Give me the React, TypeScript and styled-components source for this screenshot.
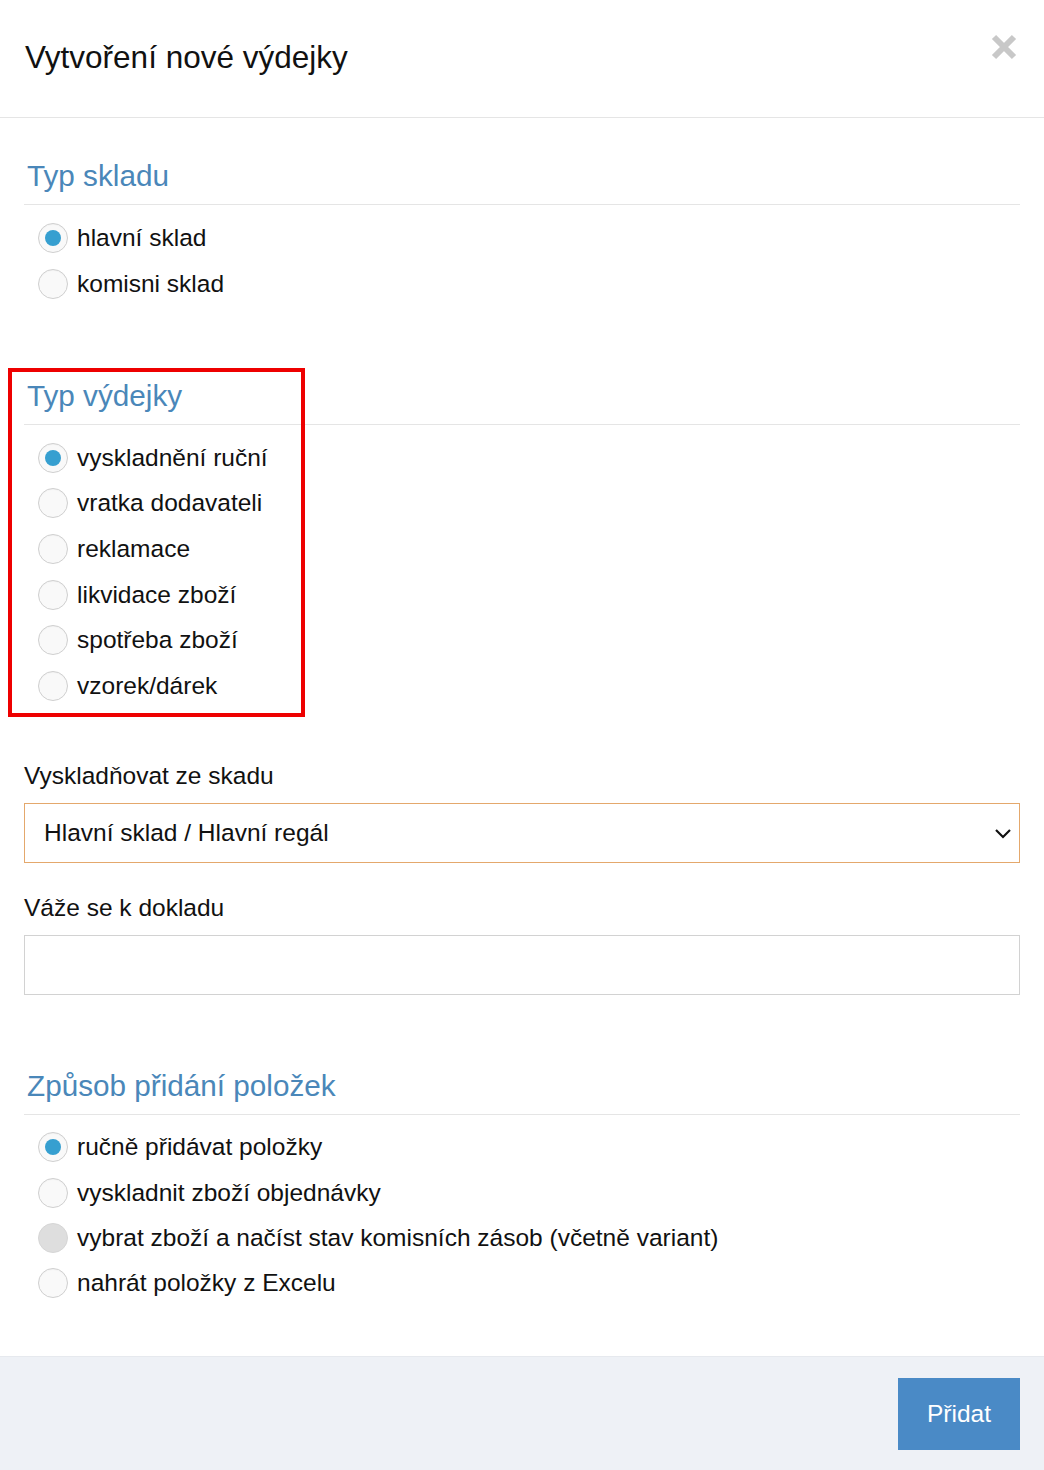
import React from 'react';
import styled, { createGlobalStyle } from 'styled-components';

const GlobalStyle = createGlobalStyle`
  html, body {
    margin: 0;
    padding: 0;
    background: #ffffff;
    font-family: "Liberation Sans", Arial, sans-serif;
    color: #111111;
  }
`;

const Modal = styled.div`
  width: 1044px;
  min-height: 1470px;
  display: flex;
  flex-direction: column;
  background: #ffffff;
`;

const Header = styled.div`
  height: 118px;
  border-bottom: 1px solid #e5e5e5;
  display: flex;
  align-items: flex-start;
  justify-content: space-between;
  padding: 0 24px 0 25px;
  box-sizing: border-box;
`;

const Title = styled.h1`
  margin: 38px 0 0;
  font-size: 31.5px;
  line-height: 38px;
  font-weight: 400;
  color: #111111;
`;

const Close = styled.button`
  margin-top: 33px;
  margin-right: 2px;
  padding: 0;
  border: none;
  background: transparent;
  width: 28px;
  height: 28px;
  display: flex;
  align-items: center;
  justify-content: center;
  cursor: pointer;
`;

const Body = styled.div`
  padding: 0 24px;
  display: flex;
  flex-direction: column;
  flex: 1;
`;

const Section = styled.section<{ $top: number }>`
  position: relative;
  margin-top: ${(p) => p.$top}px;
`;

const SectionTitle = styled.h2`
  margin: 0;
  padding: 0 0 10px 3px;
  font-size: 29.7px;
  line-height: 36px;
  font-weight: 400;
  color: #4a87b9;
  border-bottom: 1px solid #e5e5e5;
`;

const RadioList = styled.div<{ $row: number }>`
  margin-top: 10px;
  display: grid;
  grid-auto-rows: ${(p) => p.$row}px;
`;

const RadioRow = styled.label`
  display: flex;
  align-items: center;
  padding-left: 14px;
  font-size: 24.5px;
  color: #111111;
  cursor: pointer;
`;

const RadioCircle = styled.span<{ $checked?: boolean; $disabled?: boolean }>`
  width: 30px;
  height: 30px;
  box-sizing: border-box;
  border-radius: 50%;
  border: 1px solid ${(p) => (p.$disabled ? '#d6d6d6' : '#cfcfcf')};
  background: ${(p) => (p.$disabled ? '#dedede' : '#f9f9f9')};
  display: flex;
  align-items: center;
  justify-content: center;
  margin-right: 9px;
  flex-shrink: 0;
  box-shadow: ${(p) => (p.$disabled ? 'none' : 'inset 0 1px 1px rgba(0,0,0,0.03)')};

  &::after {
    content: '';
    display: ${(p) => (p.$checked ? 'block' : 'none')};
    width: 16px;
    height: 16px;
    border-radius: 50%;
    background: #369fd0;
  }
`;

const Highlight = styled.div`
  position: absolute;
  left: -16px;
  top: -10px;
  width: 297px;
  height: 349px;
  box-sizing: border-box;
  border: 4px solid #ee0000;
  pointer-events: none;
`;

const Field = styled.div<{ $top: number }>`
  margin-top: ${(p) => p.$top}px;
  display: flex;
  flex-direction: column;
  gap: 12px;
`;

const FieldLabel = styled.div`
  font-size: 24.5px;
  line-height: 30px;
  color: #111111;
`;

const SelectBox = styled.div`
  height: 60px;
  box-sizing: border-box;
  border: 1px solid #e4a86c;
  background: #ffffff;
  display: flex;
  align-items: center;
  justify-content: space-between;
  padding: 0 5px 0 19px;
  font-size: 24.5px;
`;

const TextInput = styled.div`
  height: 60px;
  box-sizing: border-box;
  border: 1px solid #d2d2d2;
  background: #ffffff;
`;

const Footer = styled.div`
  margin-top: 50px;
  background: #eef1f6;
  border-top: 1px solid #e6e9ee;
  padding: 21px 24px 20px;
  display: flex;
  justify-content: flex-end;
`;

const PrimaryButton = styled.button`
  width: 122px;
  height: 72px;
  border: none;
  background: #4a8ac6;
  color: #ffffff;
  font-family: "Liberation Sans", Arial, sans-serif;
  font-size: 24.5px;
  cursor: pointer;
`;

type Option = { label: string; checked?: boolean; disabled?: boolean };

const Radios: React.FC<{ options: Option[]; row: number; name: string }> = ({ options, row, name }) => (
  <RadioList $row={row}>
    {options.map((o) => (
      <RadioRow key={o.label} data-name={name}>
        <RadioCircle $checked={o.checked} $disabled={o.disabled} />
        {o.label}
      </RadioRow>
    ))}
  </RadioList>
);

const App: React.FC = () => {
  return (
    <>
      <GlobalStyle />
      <Modal>
        <Header>
          <Title>Vytvoření nové výdejky</Title>
          <Close aria-label="Zavřít">
            <svg width="26" height="26" viewBox="0 0 26 26">
              <path d="M3 3 L23 23 M23 3 L3 23" stroke="#c8c8c8" strokeWidth="6" />
            </svg>
          </Close>
        </Header>
        <Body>
          <Section $top={40}>
            <SectionTitle>Typ skladu</SectionTitle>
            <Radios
              name="sklad"
              row={46}
              options={[{ label: 'hlavní sklad', checked: true }, { label: 'komisni sklad' }]}
            />
          </Section>

          <Section $top={71}>
            <SectionTitle>Typ výdejky</SectionTitle>
            <Radios
              name="typ"
              row={45.6}
              options={[
                { label: 'vyskladnění ruční', checked: true },
                { label: 'vratka dodavateli' },
                { label: 'reklamace' },
                { label: 'likvidace zboží' },
                { label: 'spotřeba zboží' },
                { label: 'vzorek/dárek' },
              ]}
            />
            <Highlight />
          </Section>

          <Field $top={52}>
            <FieldLabel>Vyskladňovat ze skadu</FieldLabel>
            <SelectBox>
              Hlavní sklad / Hlavní regál
              <svg width="22" height="22" viewBox="0 0 22 22">
                <polyline points="4,8 11,15 18,8" fill="none" stroke="#111" strokeWidth="2.2" />
              </svg>
            </SelectBox>
          </Field>

          <Field $top={30}>
            <FieldLabel>Váže se k dokladu</FieldLabel>
            <TextInput />
          </Field>

          <Section $top={73}>
            <SectionTitle>Způsob přidání položek</SectionTitle>
            <Radios
              name="zpusob"
              row={45.4}
              options={[
                { label: 'ručně přidávat položky', checked: true },
                { label: 'vyskladnit zboží objednávky' },
                { label: 'vybrat zboží a načíst stav komisních zásob (včetně variant)', disabled: true },
                { label: 'nahrát položky z Excelu' },
              ]}
            />
          </Section>
        </Body>
        <Footer>
          <PrimaryButton>Přidat</PrimaryButton>
        </Footer>
      </Modal>
    </>
  );
};

export default App;
